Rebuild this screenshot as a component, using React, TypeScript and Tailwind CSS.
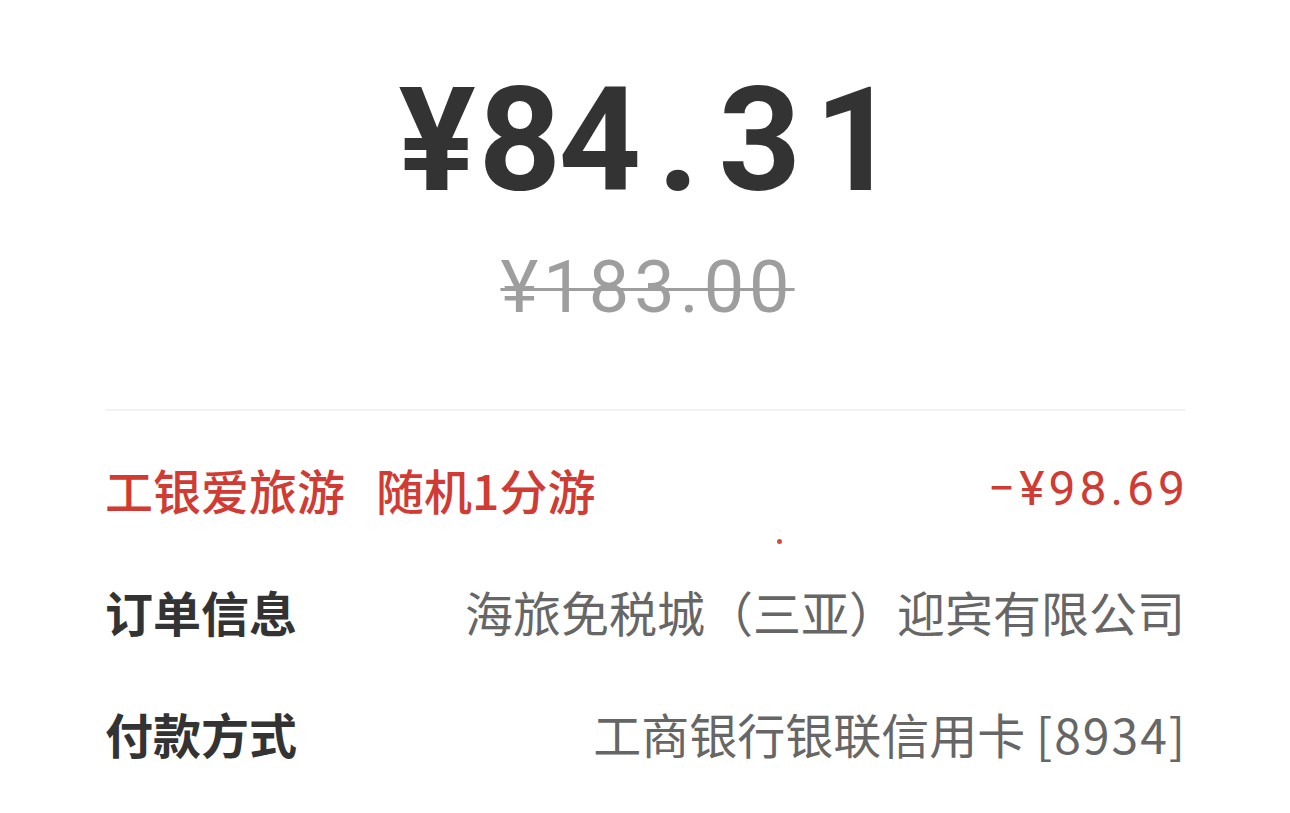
import React from "react";

export default function App() {
  return (
    <div className="w-[1290px] h-[813px] bg-white overflow-hidden font-['Noto_Sans_CJK_SC',sans-serif]">
      <div className="px-[105px]">
        {/* big price */}
        <div className="pt-[69px] flex justify-center">
          <div className="flex h-[144px] leading-[144px] text-[144px] font-bold text-[#333333] font-['Roboto','Noto_Sans_CJK_SC',sans-serif]">
            <span className="inline-block w-[83px] text-center">¥</span>
            <span className="inline-block w-[80px] text-center">8</span>
            <span className="inline-block w-[80px] text-center">4</span>
            <span className="inline-block w-[80px] text-center">.</span>
            <span className="inline-block w-[80px] text-center">3</span>
            <span className="inline-block w-[96px] pl-[16px] text-center">1</span>
          </div>
        </div>
        {/* original price */}
        <div className="mt-[39px] flex justify-center">
          <span className="h-[72px] leading-[72px] text-[72px] text-[#9e9e9e] tracking-[5px] mr-[-5px] line-through decoration-[3px] font-['Roboto',sans-serif]">
            ¥183.00
          </span>
        </div>
        {/* divider */}
        <div className="mt-[85px] h-[2px] bg-[#f2f2f2]" />
        {/* discount row */}
        <div className="relative mt-[17px] h-[122px] flex items-center justify-between">
          <span className="flex text-[48px] leading-[48px] font-medium text-[#d03b33] gap-[31px]">
            <span>工银爱旅游</span>
            <span>随机1分游</span>
          </span>
          <span className="text-[48px] leading-[48px] text-[#d03b33] tracking-[4px] mr-[-4px] font-['Roboto',sans-serif]">
            −¥98.69
          </span>
          <span className="absolute left-[672px] top-[111px] w-[5px] h-[5px] rounded-full bg-[#d94a40]" />
        </div>
        {/* order info */}
        <div className="h-[122px] flex items-center justify-between">
          <span className="text-[48px] leading-[48px] font-bold text-[#333333]">订单信息</span>
          <span className="text-[48px] leading-[48px] text-[#666666]">海旅免税城（三亚）迎宾有限公司</span>
        </div>
        {/* payment */}
        <div className="h-[122px] flex items-center justify-between">
          <span className="text-[48px] leading-[48px] font-bold text-[#333333]">付款方式</span>
          <span className="text-[48px] leading-[48px] text-[#666666] whitespace-pre">
            工商银行银联信用卡 <span className="tracking-[2px] mr-[-2px]">[8934]</span>
          </span>
        </div>
      </div>
    </div>
  );
}
